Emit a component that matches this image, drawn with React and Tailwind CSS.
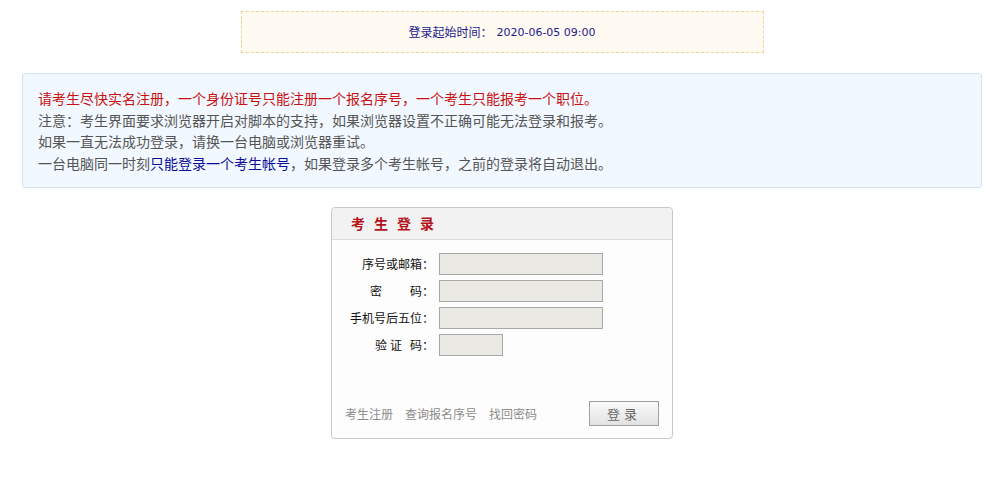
export default function App() {
  const cjk = { fontFamily: '"Noto Sans CJK SC", "Noto Sans", sans-serif' };

  return (
    <div className="min-h-screen bg-white" style={cjk}>
      <div className="ml-[22px] w-[960px] pt-[11px]">
        {/* start time bar */}
        <div className="mx-auto flex h-[42px] w-[523px] items-center justify-center border border-dashed border-[#f0cf98] bg-[#fffbf2] text-[#1a1a8c]">
          <span className="text-[12px] leading-none">登录起始时间：</span>
          <span className="ml-[4px] text-[11px] leading-none" style={{ fontFamily: '"DejaVu Sans", sans-serif' }}>
            2020-06-05 09:00
          </span>
        </div>

        {/* notice */}
        <div className="mt-[20px] rounded-[3px] border border-[#d8e2ec] bg-[#f2f8ff] pb-[13px] pl-[15px] pt-[14px] text-[14px] leading-[21.5px] text-[#555]">
          <p className="text-[#c81010]">请考生尽快实名注册，一个身份证号只能注册一个报名序号，一个考生只能报考一个职位。</p>
          <p>注意：考生界面要求浏览器开启对脚本的支持，如果浏览器设置不正确可能无法登录和报考。</p>
          <p>如果一直无法成功登录，请换一台电脑或浏览器重试。</p>
          <p>
            一台电脑同一时刻<span className="text-[#0a0a9a]">只能登录一个考生帐号</span>，如果登录多个考生帐号，之前的登录将自动退出。
          </p>
        </div>

        {/* login box */}
        <div className="mx-auto mt-[19px] w-[342px] rounded-[4px] border border-[#c8c8c8] bg-[#fdfdfd]">
          <div className="flex h-[32px] items-center rounded-t-[4px] border-b border-[#dcdcdc] bg-[#f2f2f2] pl-[19px]">
            <span className="text-[14px] font-bold tracking-[9px] text-[#b5121b]">考生登录</span>
          </div>

          <div className="flex flex-col gap-[5px] pt-[13px]">
            <Row label={<span>序号或邮箱：</span>} />
            <Row
              label={
                <span>
                  密<span className="inline-block w-[28px]" />码：
                </span>
              }
            />
            <Row label={<span>手机号后五位：</span>} />
            <Row
              label={
                <span>
                  验<span className="inline-block w-[3px]" />证<span className="inline-block w-[8px]" />码：
                </span>
              }
              small
            />
          </div>

          <div className="mt-[45px] flex items-center justify-between pb-[12px] pl-[13px] pr-[13px]">
            <div className="flex gap-[12px] text-[12px] text-[#8c8c8c]">
              <a>考生注册</a>
              <a>查询报名序号</a>
              <a>找回密码</a>
            </div>
            <button className="h-[25px] w-[70px] border border-[#a0a0a0] bg-gradient-to-b from-[#fafafa] to-[#e2e2e2] text-[13px] tracking-[4px] text-[#666]">
              登录
            </button>
          </div>
        </div>
      </div>
    </div>
  );
}

function Row({ label, small }) {
  return (
    <div className="flex items-center">
      <div className="w-[102px] text-right text-[12px] text-[#111]">{label}</div>
      <input
        className={`ml-[5px] h-[22px] border border-[#a8a8a8] bg-[#ebe9e3] outline-none ${small ? "w-[64px]" : "w-[164px]"}`}
      />
    </div>
  );
}
